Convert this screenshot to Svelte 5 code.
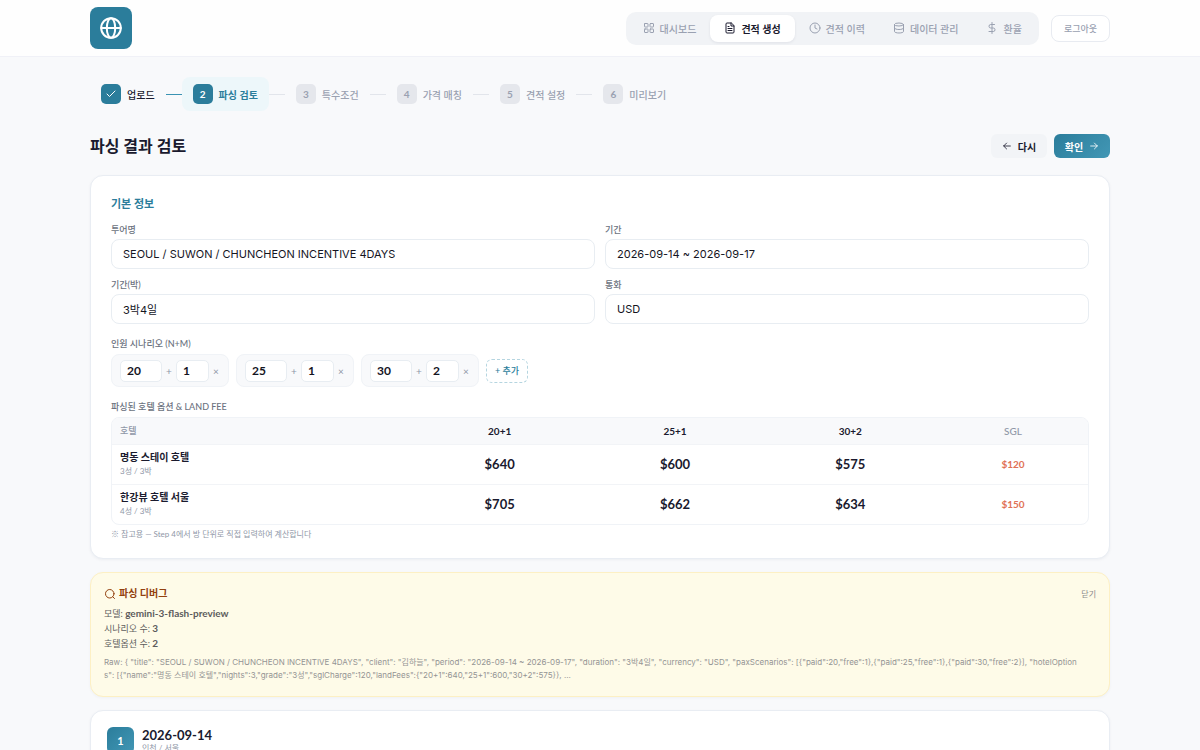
<script lang="ts">
	const menus = [
		{ icon: 'grid', label: '대시보드' },
		{ icon: 'file', label: '견적 생성' },
		{ icon: 'clock', label: '견적 이력' },
		{ icon: 'database', label: '데이터 관리' },
		{ icon: 'dollar', label: '환율' }
	];
	const activeMenu = '견적 생성';

	const steps = ['업로드', '파싱 검토', '특수조건', '가격 매칭', '견적 설정', '미리보기'];
	let currentStep = $state(2);

	let tour = $state({
		title: 'SEOUL / SUWON / CHUNCHEON INCENTIVE 4DAYS',
		period: '2026-09-14 ~ 2026-09-17',
		duration: '3박4일',
		currency: 'USD'
	});

	let scenarios = $state([
		{ paid: 20, free: 1 },
		{ paid: 25, free: 1 },
		{ paid: 30, free: 2 }
	]);

	const feeColumns = ['20+1', '25+1', '30+2'];
	const hotels = [
		{ name: '명동 스테이 호텔', grade: '3성', nights: 3, fees: [640, 600, 575], sgl: 120 },
		{ name: '한강뷰 호텔 서울', grade: '4성', nights: 3, fees: [705, 662, 634], sgl: 150 }
	];

	let debugOpen = $state(true);
	const raw =
		'{ "title": "SEOUL / SUWON / CHUNCHEON INCENTIVE 4DAYS", "client": "김하늘", "period": "2026-09-14 ~ 2026-09-17", "duration": "3박4일", "currency": "USD", "paxScenarios": [{"paid":20,"free":1},{"paid":25,"free":1},{"paid":30,"free":2}], "hotelOptions": [{"name":"명동 스테이 호텔","nights":3,"grade":"3성","sglCharge":120,"landFees":{"20+1":640,"25+1":600,"30+2":575}}, ...';

	function addScenario() {
		scenarios.push({ paid: 10, free: 0 });
	}

	function removeScenario(index: number) {
		scenarios.splice(index, 1);
	}
</script>

<header>
	<div class="header-inner">
		<a class="logo" href="/" aria-label="홈">
			<svg width="24" height="24" viewBox="0 0 24 24">
				<circle cx="12" cy="12" r="9.8" />
				<ellipse cx="12" cy="12" rx="4.2" ry="9.8" />
				<path d="M2.2 12h19.6" />
			</svg>
		</a>
		<div class="header-right">
			<nav>
				{#each menus as menu}
					<a href="/" class="tab" class:active={menu.label === activeMenu}>
						<svg width="12" height="12" viewBox="0 0 24 24">
							{#if menu.icon === 'grid'}
								<rect x="3" y="3" width="7" height="7" rx="1" />
								<rect x="14" y="3" width="7" height="7" rx="1" />
								<rect x="3" y="14" width="7" height="7" rx="1" />
								<rect x="14" y="14" width="7" height="7" rx="1" />
							{:else if menu.icon === 'file'}
								<path d="M14 2H6a2 2 0 0 0-2 2v16a2 2 0 0 0 2 2h12a2 2 0 0 0 2-2V8z" />
								<path d="M14 2v6h6M8 13h8M8 17h8M8 9h2" />
							{:else if menu.icon === 'clock'}
								<circle cx="12" cy="12" r="10" />
								<path d="M12 6v6l4 2" />
							{:else if menu.icon === 'database'}
								<ellipse cx="12" cy="5" rx="9" ry="3" />
								<path d="M3 5v14c0 1.7 4 3 9 3s9-1.3 9-3V5M3 12c0 1.7 4 3 9 3s9-1.3 9-3" />
							{:else}
								<path d="M12 1v22M17 5H9.500a3.500 3.500 0 0 0 0 7h5a3.500 3.500 0 0 1 0 7H6" />
							{/if}
						</svg>
						{menu.label}
					</a>
				{/each}
			</nav>
			<button class="logout">로그아웃</button>
		</div>
	</div>
</header>

<main>
	<ol class="steps">
		{#each steps as step, i}
			{#if i > 0}
				<li class="step-line" class:passed={i < currentStep} aria-hidden="true"></li>
			{/if}
			<li class="step" class:done={i + 1 < currentStep} class:current={i + 1 === currentStep}>
				<span class="step-no">
					{#if i + 1 < currentStep}
						<svg width="12" height="12" viewBox="0 0 24 24"><path d="M20 6 9 17l-5-5" /></svg>
					{:else}
						{i + 1}
					{/if}
				</span>
				{step}
			</li>
		{/each}
	</ol>

	<div class="title-row">
		<h1>파싱 결과 검토</h1>
		<div class="actions">
			<button class="btn">
				<svg width="10" height="10" viewBox="0 0 24 24"><path d="M20 12H4M11 5l-7 7 7 7" /></svg>
				다시
			</button>
			<button class="btn primary">
				확인
				<svg width="10" height="10" viewBox="0 0 24 24"><path d="M4 12h16M13 5l7 7-7 7" /></svg>
			</button>
		</div>
	</div>

	<section class="card">
		<h2>기본 정보</h2>
		<div class="fields">
			<label>투어명 <input type="text" bind:value={tour.title} /></label>
			<label>기간 <input type="text" bind:value={tour.period} /></label>
			<label>기간(박) <input type="text" bind:value={tour.duration} /></label>
			<label>통화 <input type="text" bind:value={tour.currency} /></label>
		</div>

		<h3>인원 시나리오 (N+M)</h3>
		<div class="scenarios">
			{#each scenarios as scenario, i}
				<div class="scenario">
					<input class="paid" type="text" aria-label="유료 인원" bind:value={scenario.paid} />
					<span>+</span>
					<input class="free" type="text" aria-label="무료 인원" bind:value={scenario.free} />
					<button aria-label="시나리오 삭제" onclick={() => removeScenario(i)}>×</button>
				</div>
			{/each}
			<button class="add" onclick={addScenario}>+ 추가</button>
		</div>

		<h3>파싱된 호텔 옵션 &amp; LAND FEE</h3>
		<div class="table-wrap">
			<table>
				<thead>
					<tr>
						<th class="hotel">호텔</th>
						{#each feeColumns as column}
							<th class="pax">{column}</th>
						{/each}
						<th class="sgl">SGL</th>
					</tr>
				</thead>
				<tbody>
					{#each hotels as hotel}
						<tr>
							<td class="hotel">
								<strong>{hotel.name}</strong>
								<small>{hotel.grade} / {hotel.nights}박</small>
							</td>
							{#each hotel.fees as fee}
								<td class="fee">${fee}</td>
							{/each}
							<td class="sgl">${hotel.sgl}</td>
						</tr>
					{/each}
				</tbody>
			</table>
		</div>
		<p class="note">※ 참고용 — Step 4에서 방 단위로 직접 입력하여 계산합니다</p>
	</section>

	{#if debugOpen}
		<section class="debug">
			<div class="debug-head">
				<h2>
					<svg width="12" height="12" viewBox="0 0 24 24">
						<circle cx="11.5" cy="11.5" r="8.5" />
						<path d="m21 21-3.500-3.500" />
					</svg>
					파싱 디버그
				</h2>
				<button onclick={() => (debugOpen = false)}>닫기</button>
			</div>
			<div class="debug-info">
				<div>모델: <b>gemini-3-flash-preview</b></div>
				<div>시나리오 수: <b>3</b></div>
				<div>호텔옵션 수: <b>2</b></div>
			</div>
			<p class="raw">Raw: {raw}</p>
		</section>
	{/if}

	<section class="day">
		<span class="day-no">1</span>
		<div>
			<h2>2026-09-14</h2>
			<p>인천 / 서울</p>
		</div>
	</section>
</main>

<style>
	:global(body) {
		margin: 0;
		background: #f8f9fb;
		color: #1a1a2e;
		font-family: Lato, 'Noto Sans CJK KR', sans-serif;
		font-size: 10px;
	}

	:global(#app) * {
		box-sizing: border-box;
	}

	h1,
	h2,
	h3,
	p {
		margin: 0;
	}

	button,
	input {
		font: inherit;
		color: inherit;
		margin: 0;
	}

	button {
		border: 0;
		background: none;
		padding: 0;
		cursor: pointer;
	}

	a {
		color: inherit;
		text-decoration: none;
	}

	svg {
		display: block;
		flex: none;
		fill: none;
		stroke: currentColor;
		stroke-width: 2;
		stroke-linecap: round;
		stroke-linejoin: round;
	}

	header {
		background: #fefefe;
		border-bottom: 1px solid #f0f1f7;
	}

	.header-inner,
	main {
		max-width: 1020px;
		margin: 0 auto;
	}

	.header-inner {
		height: 56px;
		display: flex;
		align-items: center;
		justify-content: space-between;
	}

	.logo {
		width: 42px;
		height: 42px;
		border-radius: 8px;
		background: #2b7d9b;
		color: white;
		display: grid;
		place-items: center;
	}

	.header-right {
		display: flex;
		align-items: center;
		gap: 12px;
	}

	nav {
		display: flex;
		padding: 3px;
		border-radius: 10px;
		background: #f1f3f6;
	}

	.tab {
		display: flex;
		align-items: center;
		gap: 5px;
		height: 27px;
		padding: 0 14px;
		border-radius: 8px;
		color: #9aa1b1;
		font-weight: 500;
	}

	.tab.active {
		background: white;
		color: #1a1a2e;
		font-weight: 700;
		box-shadow: 0 1px 3px rgba(20, 30, 60, 0.08);
	}

	.logout {
		height: 27px;
		padding: 0 12px;
		border: 1px solid #e8ebf1;
		border-radius: 8px;
		background: white;
		color: #9aa1b1;
		font-size: 9px;
		font-weight: 500;
	}

	.steps {
		display: flex;
		align-items: center;
		list-style: none;
		margin: 20px 0 0;
		padding: 0;
	}

	.step {
		display: flex;
		align-items: center;
		gap: 6px;
		height: 34px;
		padding: 0 11px;
		border-radius: 8px;
		color: #9aa1b1;
		font-weight: 500;
	}

	.step-no {
		width: 20px;
		height: 20px;
		border-radius: 5px;
		background: #e5e7ec;
		display: grid;
		place-items: center;
		font-weight: 700;
	}

	.step.done {
		color: #1a1a2e;
	}

	.step.current {
		background: #edf7fa;
		color: #2b7d9b;
		font-weight: 700;
	}

	.step.done .step-no,
	.step.current .step-no {
		background: #2b7d9b;
		color: white;
	}

	.step-line {
		width: 16px;
		height: 1px;
		background: #e2e5eb;
	}

	.step-line.passed {
		background: #3a93b3;
	}

	.title-row {
		display: flex;
		align-items: center;
		justify-content: space-between;
		margin: 23px 0 17px;
	}

	h1 {
		font-size: 16px;
		line-height: 24px;
		font-weight: 700;
	}

	.actions {
		display: flex;
		gap: 7px;
	}

	.btn {
		display: flex;
		align-items: center;
		justify-content: center;
		gap: 6px;
		height: 24px;
		min-width: 56px;
		border-radius: 6px;
		background: #f2f4f7;
		font-weight: 600;
	}

	.btn.primary {
		background: linear-gradient(135deg, #2b7d9b, #4297b5);
		color: white;
		font-weight: 700;
	}

	.card,
	.day {
		background: white;
		border: 1px solid #e9edf3;
		border-radius: 13px;
		box-shadow: 0 1px 3px rgba(20, 40, 80, 0.05);
	}

	.card {
		padding: 20px 20px 18px;
	}

	.card h2 {
		font-size: 11px;
		line-height: 16px;
		font-weight: 700;
		color: #2b7d9b;
		margin-bottom: 11px;
	}

	.fields {
		display: grid;
		grid-template-columns: 1fr 1fr;
		gap: 9px 10px;
	}

	label,
	h3 {
		font-size: 9px;
		line-height: 14px;
		font-weight: 500;
		color: #6b7280;
	}

	label input {
		display: block;
		width: 100%;
		height: 30px;
		margin-top: 2px;
		padding: 0 11px;
		border: 1px solid #e8edf2;
		border-radius: 8px;
		background: white;
		color: #15151f;
		font-family: Inter, 'Noto Sans CJK KR', sans-serif;
		font-size: 11px;
		font-weight: 400;
	}

	h3 {
		margin: 13px 0 3px;
	}

	.scenarios {
		display: flex;
		flex-wrap: wrap;
		align-items: center;
		gap: 7px;
	}

	.scenario {
		display: flex;
		align-items: center;
		height: 33px;
		padding: 0 5px 0 8px;
		border: 1px solid #f0f3f7;
		border-radius: 8px;
		background: #f8f9fb;
		color: #8f97a7;
	}

	.scenario span,
	.scenario button {
		width: 14px;
		text-align: center;
	}

	.scenario input {
		height: 22px;
		padding: 0 6px;
		border: 1px solid #e8edf2;
		border-radius: 5px;
		background: white;
		color: #15151f;
		font-size: 12px;
		font-weight: 700;
	}

	.scenario .paid {
		width: 42px;
	}

	.scenario .free {
		width: 33px;
	}

	.add {
		width: 42px;
		height: 24px;
		border: 1px dashed #b5d5e0;
		border-radius: 6px;
		color: #2b7d9b;
		font-size: 9px;
		font-weight: 500;
	}

	.table-wrap {
		border: 1px solid #f0f3f7;
		border-radius: 8px;
		overflow: hidden;
	}

	table {
		width: 100%;
		table-layout: fixed;
		border-collapse: collapse;
	}

	th {
		height: 26px;
		padding: 0 8px;
		background: #f8f9fb;
		color: #8f97a7;
		font-size: 9px;
		font-weight: 500;
		text-align: center;
	}

	th.hotel {
		width: 300px;
	}

	th.sgl {
		width: 150px;
		font-size: 10px;
	}

	th.pax {
		color: #1a1a2e;
		font-size: 10px;
		font-weight: 700;
	}

	td {
		height: 40px;
		padding: 0 8px;
		border-top: 1px solid #f2f4f7;
		text-align: center;
	}

	.hotel {
		text-align: left;
	}

	td strong {
		display: block;
		font-size: 10px;
		line-height: 15px;
		font-weight: 700;
	}

	td small {
		display: block;
		font-size: 8px;
		line-height: 13px;
		color: #8f97a7;
	}

	.fee {
		font-size: 13px;
		font-weight: 700;
	}

	td.sgl {
		color: #e07155;
		font-size: 10px;
		font-weight: 700;
	}

	.note {
		margin-top: 3px;
		font-size: 8px;
		line-height: 12px;
		color: #8f97a7;
	}

	.debug {
		margin-top: 13px;
		padding: 13px 13px 14px;
		border: 1px solid #fdf0c4;
		border-radius: 13px;
		background: #fefbe8;
		box-shadow: 0 1px 3px rgba(20, 40, 80, 0.04);
	}

	.debug-head {
		display: flex;
		align-items: center;
		justify-content: space-between;
		margin-bottom: 5px;
	}

	.debug h2 {
		display: flex;
		align-items: center;
		gap: 3px;
		font-size: 10px;
		line-height: 15px;
		font-weight: 700;
		color: #92400e;
	}

	.debug-head button {
		font-size: 8px;
		color: #8a8a8a;
	}

	.debug-info {
		font-size: 9px;
		line-height: 15px;
		color: #5c5c5c;
	}

	.debug-info b {
		font-size: 10px;
		font-weight: 700;
	}

	.raw {
		margin-top: 5px;
		padding-right: 16px;
		font-family: Inter, 'Noto Sans CJK KR', sans-serif;
		font-size: 8px;
		line-height: 13px;
		color: #949494;
		word-break: break-all;
	}

	.day {
		display: flex;
		gap: 8px;
		margin-top: 13px;
		padding: 16px;
	}

	.day-no {
		width: 27px;
		height: 27px;
		border-radius: 6px;
		background: linear-gradient(135deg, #2b7d9b, #4297b5);
		color: white;
		display: grid;
		place-items: center;
		font-size: 11px;
		font-weight: 700;
	}

	.day h2 {
		font-size: 13px;
		line-height: 16px;
		font-weight: 700;
	}

	.day p {
		font-size: 8px;
		line-height: 11px;
		color: #8f97a7;
	}
</style>
